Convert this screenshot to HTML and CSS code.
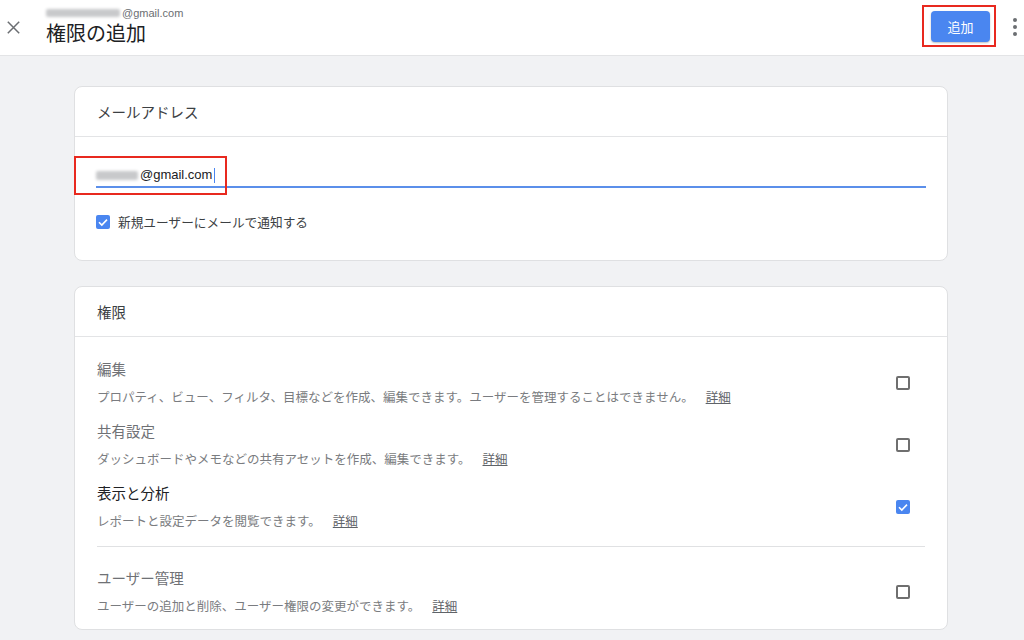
FILE: index.html
```html
<!DOCTYPE html>
<html lang="ja">
<head>
<meta charset="utf-8">
<title>権限の追加</title>
<link rel="stylesheet" href="styles.css">
</head>
<body>
<header class="topbar">
  <div class="close">
    <svg width="13" height="13" viewBox="0 0 13 13"><path d="M0.8 0.8L12.2 12.2M12.2 0.8L0.8 12.2" stroke="#6b6e72" stroke-width="1.5" fill="none"/></svg>
  </div>
  <div class="titles">
    <div class="acct"><span class="blur w76"></span>@gmail.com</div>
    <h1 class="title">権限の追加</h1>
  </div>
  <div class="spacer"></div>
  <div class="btn-wrap">
    <button class="add-btn">追加</button>
    <span class="mark mark-btn"></span>
  </div>
  <div class="kebab"><i></i><i></i><i></i></div>
</header>

<main class="content">
  <section class="card">
    <div class="card-head">メールアドレス</div>
    <div class="card-body email-body">
      <div class="field">
        <div class="field-text"><span class="blur w44"></span>@gmail.com<span class="caret"></span></div>
        <span class="mark mark-input"></span>
      </div>
      <label class="notify">
        <span class="cb checked small"><svg viewBox="0 0 14 14"><path d="M3 7.2L5.8 10L11 4.6" stroke="#fff" stroke-width="1.6" fill="none"/></svg></span>
        <span>新規ユーザーにメールで通知する</span>
      </label>
    </div>
  </section>

  <section class="card">
    <div class="card-head">権限</div>
    <div class="perm-list">
      <div class="perm">
        <div class="perm-text">
          <div class="perm-title">編集</div>
          <div class="perm-desc">プロパティ、ビュー、フィルタ、目標などを作成、編集できます。ユーザーを管理することはできません。<a class="more">詳細</a></div>
        </div>
        <span class="cb"></span>
      </div>
      <div class="perm">
        <div class="perm-text">
          <div class="perm-title">共有設定</div>
          <div class="perm-desc">ダッシュボードやメモなどの共有アセットを作成、編集できます。<a class="more">詳細</a></div>
        </div>
        <span class="cb"></span>
      </div>
      <div class="perm">
        <div class="perm-text">
          <div class="perm-title dark">表示と分析</div>
          <div class="perm-desc">レポートと設定データを閲覧できます。<a class="more">詳細</a></div>
        </div>
        <span class="cb checked"><svg viewBox="0 0 14 14"><path d="M3 7.2L5.8 10L11 4.6" stroke="#fff" stroke-width="1.6" fill="none"/></svg></span>
      </div>
      <div class="divider"></div>
      <div class="perm">
        <div class="perm-text">
          <div class="perm-title">ユーザー管理</div>
          <div class="perm-desc">ユーザーの追加と削除、ユーザー権限の変更ができます。<a class="more">詳細</a></div>
        </div>
        <span class="cb"></span>
      </div>
    </div>
  </section>
</main>
</body>
</html>
```

FILE: styles.css
```css
* { box-sizing: border-box; }
html, body {
  margin: 0;
  padding: 0;
  width: 1024px;
  height: 640px;
  overflow: hidden;
  background: #f1f2f4;
  font-family: "Noto Sans CJK JP", "Noto Sans", Roboto, sans-serif;
  color: #3c4043;
}
.topbar {
  height: 56px;
  background: #fff;
  border-bottom: 1px solid #e3e4e6;
  display: flex;
  align-items: center;
}
.close {
  width: 46px;
  flex: none;
  padding-left: 7px;
  display: flex;
  align-items: center;
  margin-top: -1px;
}
.close svg { flex: none; }
.titles {
  display: flex;
  flex-direction: column;
  margin-top: -2px;
}
.acct {
  font-family: "Liberation Sans", Arial, sans-serif;
  font-size: 11px;
  line-height: 14px;
  color: #6b6e72;
  display: flex;
  align-items: center;
  height: 14px;
  margin-top: -1px;
}
.blur {
  display: inline-block;
  height: 8px;
  background: #c8c9cb;
  filter: blur(1.6px);
  border-radius: 2px;
}
.blur.w76 { width: 74px; margin-right: 2px; }
.blur.w44 { width: 42px; margin-right: 2px; height: 9px; }
.title {
  margin: 0;
  font-size: 20px;
  font-weight: 400;
  line-height: 26px;
  color: #202124;
}
.spacer { flex: 1; }
.btn-wrap {
  position: relative;
  margin-right: 16px;
  margin-top: -3px;
}
.add-btn {
  width: 59px;
  height: 31px;
  border: none;
  border-radius: 4px;
  background: #4a86f0;
  color: #fff;
  font-family: "Noto Sans CJK JP", sans-serif;
  font-size: 13px;
  box-shadow: 0 1px 2px rgba(0,0,0,0.25);
  display: block;
}
.mark {
  position: absolute;
  border: 2px solid #e8291f;
  pointer-events: none;
}
.mark-btn { left: -9px; top: -6px; width: 74px; height: 42px; }
.kebab {
  width: 18px;
  flex: none;
  display: flex;
  flex-direction: column;
  align-items: center;
  gap: 3px;
  margin-top: -1px;
}
.kebab i {
  width: 4px;
  height: 4px;
  border-radius: 50%;
  background: #6b6e72;
}
.content {
  padding: 30px 76px 0 74px;
  display: flex;
  flex-direction: column;
  gap: 25px;
}
.card {
  background: #fff;
  border: 1px solid #dfe0e2;
  border-radius: 8px;
}
.card-head {
  height: 50px;
  padding: 0 22px;
  display: flex;
  align-items: center;
  font-size: 14.5px;
  color: #3c4043;
  border-bottom: 1px solid #e3e4e6;
}
.email-body {
  padding: 28px 21px 28px 21px;
}
.field {
  position: relative;
  border-bottom: 2px solid #5b8fea;
  height: 23px;
}
.field-text {
  font-family: "Liberation Sans", Arial, sans-serif;
  font-size: 13px;
  line-height: 20px;
  color: #202124;
  display: flex;
  align-items: center;
}
.caret {
  display: inline-block;
  width: 1px;
  height: 15px;
  background: #4a86f0;
  margin-left: 2px;
}
.mark-input { left: -22px; top: -9px; width: 153px; height: 39px; }
.notify {
  margin-top: 24px;
  display: flex;
  align-items: center;
  gap: 8px;
  font-size: 12.7px;
  color: #3c4043;
  line-height: 20px;
}
.cb {
  width: 14px;
  height: 14px;
  border: 2px solid #6f6f6f;
  border-radius: 2px;
  flex: none;
  display: flex;
}
.cb.checked {
  background: #4a86f0;
  border: none;
}
.cb svg { width: 14px; height: 14px; }
.perm-list {
  padding: 15px 0 6px;
}
.perm {
  display: flex;
  align-items: center;
  padding: 3px 37px 3px 22px;
  height: 62px;
}
.perm-text { flex: 1; }
.perm-title {
  font-size: 14.5px;
  line-height: 28px;
  color: #6f7175;
}
.perm-title.dark { color: #202124; }
.perm-desc {
  font-size: 12.5px;
  line-height: 28px;
  color: #7a7c80;
  white-space: nowrap;
}
.more {
  margin-left: 12px;
  text-decoration: underline;
  color: #5f6368;
}
.divider {
  height: 1px;
  background: #e0e1e3;
  margin: 8px 22px 14px;
}
```
